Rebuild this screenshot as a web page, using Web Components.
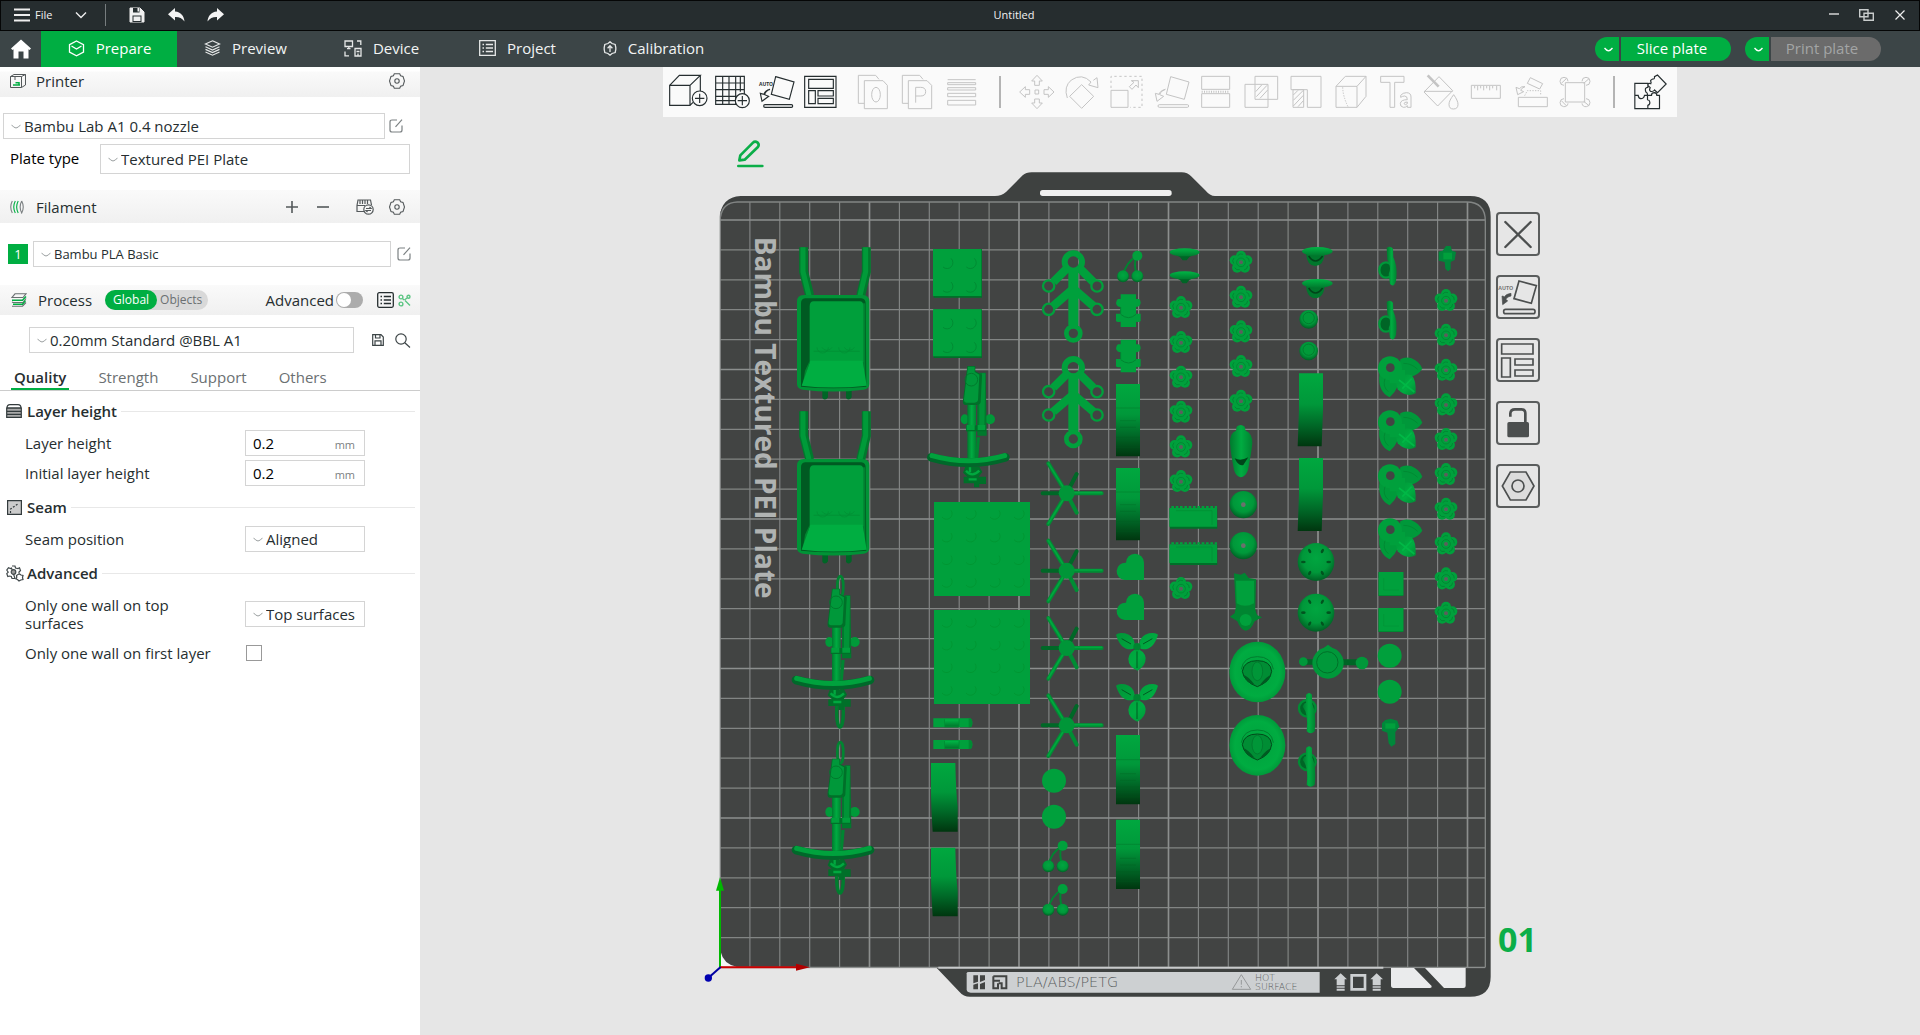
<!DOCTYPE html>
<html lang="en">
<head>
<meta charset="utf-8">
<title>Untitled</title>
<style>
html,body{height:100%}
body{margin:0;font:15px/18px "Open Sans","Noto Sans",sans-serif;color:#262e30;background:#e6e6e6;overflow:hidden}
</style>
</head>
<body>
<slicer-app>
  <title-bar slot="title" name="Untitled"></title-bar>
  <main-tabs slot="tabs"></main-tabs>
  <side-panel slot="side">
    <section-head icon="printer" label="Printer" first>
      <tool-button icon="gear" label="Printer settings"></tool-button>
    </section-head>
    <printer-row></printer-row>
    <plate-type></plate-type>
    <section-head icon="spool" label="Filament" tall>
      <tool-button icon="plus" label="Add filament"></tool-button>
      <tool-button class="wide" icon="minus" label="Remove filament"></tool-button>
      <tool-button class="mid" icon="ams" label="Sync filaments"></tool-button>
      <tool-button icon="gear" label="Filament settings"></tool-button>
    </section-head>
    <filament-row></filament-row>
    <process-head></process-head>
    <process-preset></process-preset>
    <quality-tabs></quality-tabs>
    <setting-group icon="layers" label="Layer height">
      <setting-row label="Layer height" kind="number" value="0.2"></setting-row>
      <setting-row label="Initial layer height" kind="number" value="0.2"></setting-row>
    </setting-group>
    <setting-group icon="seam" label="Seam">
      <setting-row label="Seam position" kind="select" value="Aligned"></setting-row>
    </setting-group>
    <setting-group icon="cogs" label="Advanced">
      <setting-row label="Only one wall on top surfaces" kind="select" value="Top surfaces"></setting-row>
      <setting-row label="Only one wall on first layer" kind="check"></setting-row>
    </setting-group>
  </side-panel>
  <plate-view slot="view"></plate-view>
</slicer-app>

<script>
/* name: [width, height, viewBox, stroke colour, stroke width, markup] */
const ICONS = {
  menu:[16,14,'0 0 16 14','#eee',2,'<path d="M0 1.5H16M0 7H16M0 12.5H16"/>'],
  down:[12,8,'0 0 12 8','#eee',1.4,'<path d="M1 1.5L6 6.5L11 1.5"/>'],
  save:[16,16,'0 0 16 16','#eee',1,'<path d="M1 1H11L15 5V15H1Z" fill="#f0f0f0"/><path d="M4 1V5.5H10.5V1M3.5 15V8.500H12.500V15" fill="#262e30" stroke="none"/><path d="M8.500 1H10V4.500H8.500ZM4.500 9.500H11.500V14H4.500Z" fill="#f0f0f0" stroke="none"/>'],
  undo:[17,14,'0 0 17 14','none',0,'<path fill="#f4f4f4" d="M7 0V3.500C13 4 16 8 16.500 13.500C14 10 11 8.800 7 9V12.500L0 6.300Z"/>'],
  redo:[17,14,'0 0 17 14','none',0,'<path fill="#f4f4f4" d="M10 0V3.500C4 4 1 8 .5 13.500C3 10 6 8.800 10 9V12.500L17 6.300Z"/>'],
  min:[10,12,'0 0 10 12','#eee',1.3,'<path d="M0 5H10"/>'],
  restore:[15,12,'0 0 15 12','#c8cccc',1.4,'<path d="M.7.7H9V7.700H.7ZM5 4.300H14.300V11.300H5Z"/>'],
  close:[10,10,'0 0 10 10','#eee',1.2,'<path d="M.5.5L9.500 9.500M9.500.5L.5 9.500"/>'],
  home:[20,20,'0 0 20 20','none',0,'<path fill="#fff" d="M10 .5L20 9.500L18.500 11L17.500 10.200V19.500H12.500V12.500H7.500V19.500H2.500V10.200L1.500 11L0 9.500Z"/>'],
  prepare:[17,17,'0 0 17 17','#fff',1.3,'<path d="M8.500 1L15.500 4.700V12L8.500 15.800L1.500 12V4.700ZM3.500 6L8.500 9L13.500 6"/>'],
  preview:[17,16,'0 0 17 16','#e6e8e8',1.2,'<path d="M8.500.8L15.500 4L8.500 7.200L1.500 4ZM1.500 6.800L8.500 10L15.500 6.800M1.500 9.400L8.500 12.600L15.500 9.400M1.500 12L8.500 15.200L15.500 12"/>'],
  device:[18,17,'0 0 18 17','#e6e8e8',1.3,'<path d="M1 1H8.500V6.500H1ZM3 8.700H6.500M4.800 6.500V8.700M13 1H16.800V5M1 11.500V15.800H5M11 8.500H17V16H11ZM12.500 11.500H15.500M14 13.500V16"/>'],
  project:[17,16,'0 0 17 16','#e6e8e8',1.3,'<path d="M.7.7H16.300V15.300H.7Z"/><path stroke-dasharray="1.500 1.800 20" d="M3.500 4.500H14M3.500 8H14M3.500 11.500H14"/>'],
  calib:[14,15,'0 0 14 15','#e6e8e8',1.3,'<path d="M7 .8L9 2.500L12.200 3.500L12.800 6.500L12.800 8.500L12.200 11.500L9 12.500L7 14.200L5 12.500L1.800 11.500L1.200 8.500L1.200 6.500L1.800 3.500L5 2.500Z"/><path d="M7 11V5M4.600 7.300L7 4.800L9.400 7.300"/>'],
  tick:[9,5,'0 0 9 5','#fff',1.3,'<path d="M.5 1Q2.500 3.600 4.500 3.800Q6.500 3.600 8.500 1"/>'],
  chev:[10,5,'0 0 10 5','#9a9fa0',1,'<path d="M.5.8Q2.500 3.600 5 4Q7.500 3.600 9.500.8"/>'],
  printer:[16,14,'0 0 16 14','#54595b',1,'<path d="M.5 2.500H11.500V13.500H.5ZM.5 2.500L4 .5H15.500L11.500 2.500M15.500.5V11L11.500 13.500M5 2.500V6"/><path stroke="#00ae42" stroke-width="1.500" d="M3 11H10M5.500 8.800H9V10.500"/>'],
  gear:[16,16,'0 0 16 16','#54595b',1.1,'<path d="M5.300.8H10.700L11.600 2.700L14 3.400L15.500 8L14 12.600L11.600 13.300L10.700 15.200H5.300L4.400 13.300L2 12.600L.5 8L2 3.400L4.400 2.700Z"/><circle cx="8" cy="8" r="2.200"/>'],
  edit:[14,14,'0 0 14 14','#7b8082',1.2,'<path d="M8 1H3Q1 1 1 3V11Q1 13 3 13H11Q13 13 13 11V6.500M6.500 7.800L13 .6"/>'],
  spool:[14,14,'0 0 14 14','#7b8082',1.1,'<path d="M2.300 1Q-.8 7 2.300 13M11.700 1Q14.800 7 11.700 13Q8.600 7 11.700 1"/><path stroke="#00ae42" d="M5.300 1Q2.200 7 5.300 13M8.200 1Q5.100 7 8.200 13"/>'],
  plus:[12,12,'0 0 12 12','#54595b',1.6,'<path d="M6 0V12M0 6H12"/>'],
  minus:[12,12,'0 0 12 12','#54595b',1.600,'<path d="M0 6H12"/>'],
  ams:[18,16,'0 0 18 16','#54595b',1.2,'<path d="M9 12.500H1V6.500L2 1H14.500L15.500 6M1 6.500H9M4 1V5M6.500 1V5M9 1V5M11.500 1V5"/><circle cx="12.500" cy="10.500" r="4.700" fill="#f6f6f6"/><path d="M10 9.500H15L13.500 8M15 11.500H10L11.500 13"/>'],
  process:[16,14,'0 0 16 14','#6a7072',1.100,'<path d="M4 .8H15L12 4.500H1ZM1 9L2 9.500H12L15 5.500M1 13.200H11.500L15 9.500"/><path stroke="#00ae42" stroke-width="1.500" d="M1 7.200H11.500L15 3.500M2 11.300H11.500L14.500 7.600"/>'],
  list:[17,16,'0 0 17 16','#262e30',1.300,'<rect x=".7" y=".7" width="15.600" height="14.600" rx="1.500"/><path stroke-dasharray="1.500 1.800 20" d="M3.500 4.500H14M3.500 8H14M3.500 11.500H14"/>'],
  nodes:[13,13,'0 0 13 13','#5cc583',1.4,'<circle cx="3" cy="3" r="1.900"/><circle cx="3" cy="10" r="1.900"/><circle cx="10.500" cy="2.800" r="1.500"/><path d="M4.500 4.500L6 6M7 6.500L12 11.500M6.500 6L9 4"/>'],
  disk:[12,12,'0 0 12 12','#3c4446',1.200,'<path d="M.7.7H9L11.300 3V11.300H.7ZM3.500.7V4H8V.7M3 11.300V6.800H9V11.300"/>'],
  search:[16,15,'0 0 16 15','#3c4446',1.200,'<circle cx="6" cy="6" r="5.200"/><path d="M9.800 9.800L15 14.500"/>'],
  layers:[16,14,'0 0 16 14','#333b3d',1.200,'<path d="M1 4Q1 .7 4 .7H12Q15 .7 15 4Z"/><path fill="#aaa" d="M.7 4.200H15.300V7.300H.7ZM.7 7.300H15.300V10.300H.7ZM.7 10.300H15.300V13.400H.7Z"/>'],
  seam:[15,15,'0 0 15 15','#333b3d',1.200,'<path fill="#ccc" d="M.6.6H14.400V14.400H.6Z"/><path stroke-dasharray="2 1.500" d="M3.500 13V9L11.500 3.500"/>'],
  cogs:[18,17,'0 0 18 17','#40484a',1.200,'<path d="M6 1H9L9.500 3L12 3.500L13.500 2.800L14.500 5.500L13 7V8.500M9 13.500H6L5.300 11.500L3.500 11L1.800 11.500L.8 8.700L2.200 7.200L.8 5L2.500 2.800L4.500 3.500L5.500 3Z"/><circle cx="7.500" cy="7" r="2.300" fill="#9a9a9a"/><path d="M12 9.500L13.500 9L15 10L17 10.500L16.500 12.500L17 14.500L14.800 15L13 16L11.500 14.500L10 14L10.800 12.200L10.500 10.500Z"/>'],
  /* plate toolbar: drawn on a grid three times finer than the button */
  t_cube:[44,50,'33 21 132 150','#262e30',3.500,'<path d="M44 76H105V136H44ZM44 76L73 46H136L105 76M136 46V94M105 136L114 127"/><circle cx="134" cy="115" r="22" fill="#fafafa"/><path d="M134 101V129M120 115H148"/>'],
  t_grid:[44,50,'165 21 132 150','#262e30',3.500,'<path d="M182 49H268V133H182ZM203 49V133M222 49V133M242 49V133M182 69H268M182 89H268M182 109H268M256 49V95M182 122H240"/><circle cx="262" cy="122" r="21" fill="#fafafa"/><path d="M262 108V136M248 122H276"/>'],
  t_auto:[44,50,'297 21 132 150','#262e30',3.500,'<path d="M362 50L417 66L403 118L349 103ZM345 88Q330 94 329 104L341 109L321 124L316 100L327 103Q330 92 345 88"/><rect x="326" y="134" width="87" height="8" rx="4"/><g stroke="none" fill="#262e30"><text x="312" y="77" font-size="15" font-weight="700" font-family="Open Sans">AUTO</text></g>'],
  t_layout:[44,50,'429 21 132 150','#262e30',3.500,'<path d="M449 49H543V142H449ZM461 58H535V85H461ZM461 92H481V131H461ZM489 92H535V108H489ZM489 115H535V131H489Z"/>'],
  t_zero:[44,50,'585 21 132 150','#c4c4c4',3,'<path d="M628 130H610V46H662L672 58M628 62H684L697 76V146H628Z"/><ellipse cx="663" cy="104" rx="13" ry="22"/>'],
  t_p:[44,50,'717 21 132 150','#c4c4c4',3,'<path d="M760 130H742V46H794L804 58M760 62H816L830 76V146H760ZM782 128V82H797Q812 82 812 95Q812 108 797 108H782"/>'],
  t_lines:[44,50,'849 21 132 150','#c4c4c4',3,'<path d="M878 59H962M878 68H962V74H878ZM878 83H962V90H878ZM878 100H962V110H878ZM878 121H962V135H878Z"/>'],
  t_move:[45,50,'1076 21 135 150','#c4c4c4',3,'<path d="M1145 46L1161 63H1152V76H1138V63H1129ZM1145 146L1161 129H1152V117H1138V129H1129ZM1093 96L1110 80V89H1123V103H1110V112ZM1196 96L1179 80V89H1166V103H1179V112ZM1139 90H1150V102H1139Z"/>'],
  t_rotate:[45,50,'1211 21 135 150','#c4c4c4',3,'<path d="M1279 74L1315 109L1279 145L1243 109ZM1236 114Q1224 80 1248 60Q1280 38 1307 66L1300 75L1328 83L1325 53L1314 61"/>'],
  t_scale:[45,50,'1346 21 135 150','#c4c4c4',3,'<path d="M1367 91H1418V142H1367ZM1422 80L1436 67L1428 62L1449 62V83L1442 75L1430 88Z"/><path stroke-dasharray="7 8" d="M1367 84V49H1460V142H1424"/>'],
  t_lay:[45,50,'1481 21 135 150','#c4c4c4',3,'<path d="M1546 50L1601 66L1587 118L1533 103ZM1530 88Q1514 94 1513 104L1525 109L1505 124L1500 100L1511 103Q1514 92 1530 88"/><rect x="1508" y="134" width="92" height="8" rx="4"/>'],
  t_cut:[45,50,'100 21 133 150','#c4c4c4',3,'<path d="M122 49H206V88H122ZM122 101H206V142H122Z"/><path stroke-width="6" stroke-dasharray="3 4" d="M122 95H206"/>'],
  t_bool:[45,50,'233 21 133 150','#c4c4c4',3,'<path d="M280 49H348V118H280ZM250 73H319V142H250ZM282 95L300 75M284 110L316 76M295 115L318 90"/>'],
  t_sub:[45,50,'367 21 133 150','#c4c4c4',3,'<path d="M387 49H477V142H436V89H387ZM393 89H425V142H393ZM394 105L408 91M394 121L424 91M394 138L424 106M408 140L424 122"/>'],
  t_box:[45,50,'500 21 133 150','#c4c4c4',3,'<path d="M520 79H583V142H520ZM520 79L548 49H610L583 79M610 49V109L583 142"/><path stroke-dasharray="4 4" d="M540 82Q541 110 556 140"/>'],
  t_text:[45,50,'634 21 133 150','#c4c4c4',3,'<path d="M653 49H723V67H695V142H681V67H653ZM713 112V106Q720 98 730 98Q744 98 744 111V142H733V137Q728 143 721 142Q711 140 712 130Q714 119 733 119Q733 108 725 108Q719 108 713 112ZM733 126Q723 126 723 131Q727 137 733 131Z"/>'],
  t_paint:[45,50,'767 21 133 150','#c4c4c4',3,'<path d="M826 50L867 92L822 138L781 96ZM781 94H867M870 104Q883 122 883 133Q883 147 869 147Q856 147 856 133Q856 122 870 104"/><path stroke-width="8" d="M792 46L825 80"/>'],
  t_ruler:[45,50,'900 21 133 150','#c4c4c4',3,'<path d="M921 76H1008V115H921ZM931 78V85M940 78V91M949 78V85M958 78V91M967 78V85M976 78V91M985 78V85M997 78V91"/>'],
  t_asm:[45,50,'1034 21 133 150','#c4c4c4',3,'<path d="M1061 112H1148V140H1061ZM1097 53L1134 71L1125 87L1088 70ZM1081 80Q1070 84 1068 91L1077 95L1059 104L1054 82L1064 86Q1070 78 1081 80"/><path stroke-dasharray="4 4" d="M1080 107L1088 92H1128V107"/>'],
  t_pts:[45,50,'1167 21 133 150','#c4c4c4',3,'<path d="M1200 68H1258V126H1200Z"/><path d="M1196 76A12 12 0 1 1 1208 64M1250 64A12 12 0 1 1 1262 76M1262 116A12 12 0 1 1 1250 130M1208 130A12 12 0 1 1 1196 116M1188 70L1204 55M1255 70L1271 56M1188 122L1204 138M1255 124L1271 137"/>'],
  t_puzzle:[44,50,'1384 21 131 150','#262e30',3.500,'<path d="M1404 70H1443V82Q1432 82 1437 96Q1442 97 1442 106H1433Q1431 116 1422 116Q1415 115 1414 106H1404ZM1404 106V146H1443V136Q1450 134 1449 126Q1448 120 1442 119V106H1454Q1454 98 1463 98Q1470 99 1470 106H1478V146H1443M1450 62L1457 57Q1464 58 1463 50L1472 45L1498 72L1472 98L1463 90Q1459 96 1451 94Q1446 90 1450 83L1443 76Q1444 68 1452 71Q1455 66 1450 62"/>'],
  pencil:[27,28,'245 241 81 84','#0bae48',8,'<path stroke-linejoin="round" d="M252 302L255 287L293 249Q299 243 307 249Q313 256 307 263L268 300Z"/><path stroke-linecap="round" d="M249 319H321"/>'],
  s_close:[44,44,'108 67 132 132','#4c4f4f',7,'<path stroke-linecap="round" d="M136 97L212 172M212 97L136 172"/>'],
  s_auto:[44,44,'108 257 132 132','#4c4f4f',5,'<path d="M177 275L229 289L214 342L162 328Z"/><path fill="#4c4f4f" d="M153 312Q138 314 134 322L126 320L128 346L143 335L138 330Q141 322 153 320Z" stroke-width="2"/><rect x="131" y="360" width="94" height="13" rx="6"/><g stroke="none" fill="#777"><text x="115" y="301" font-size="16" font-weight="700" font-family="Open Sans">AUTO</text></g>'],
  s_layout:[44,44,'108 445 132 132','#4c4f4f',5,'<path d="M125 463H219V493H125ZM125 505H151V562H125ZM165 508H219V526H165ZM165 541H219V559H165Z"/>'],
  s_lock:[44,44,'108 633 132 132','#4c4f4f',8,'<path d="M151 680V670Q152 658 165 658H185Q196 658 196 670V698"/><rect x="142" y="696" width="65" height="46" rx="5" fill="#4c4f4f" stroke="none"/>'],
  s_nut:[44,44,'106 822 132 132','#4c4f4f',5,'<path fill="#dcdcdc" d="M149 846H196L220 888L196 930H149L125 888Z"/><circle cx="172" cy="888" r="18"/>'],
};
const svg = n => { const [w,h,vb,c,sw,m] = ICONS[n];
  return `<svg width="${w}" height="${h}" viewBox="${vb}" fill="none" stroke="${c}" stroke-width="${sw}" aria-hidden="true">${m}</svg>`; };
const RESET = `*{box-sizing:border-box}button,input,select{font:inherit;color:inherit;background:none;border:0;margin:0;padding:0;outline:0}svg{display:block;flex:none}`;
const define = (tag, html) => customElements.define(tag, class extends HTMLElement {
  constructor(){ super(); this.attachShadow({mode:'open'}); }
  connectedCallback(){
    const t = document.createElement('template');
    t.innerHTML = `<style>${RESET}</style>` + html(k => this.getAttribute(k) || '', this);
    this.shadowRoot.replaceChildren(t.content.cloneNode(true));
  }
});

define('slicer-app', () => `<style>
:host{display:grid;grid-template:31px 36px minmax(0,1fr)/420px minmax(0,1fr);height:100vh}
::slotted([slot=title]),::slotted([slot=tabs]){grid-column:1/3}
</style><slot name="title"></slot><slot name="tabs"></slot><slot name="side"></slot><slot name="view"></slot>`);

define('tool-button', a => `<style>:host{display:block}button{display:block}
:host([framed]) button{box-shadow:inset 0 0 0 2px #5a5d5d;border-radius:4px}
</style>
<button type="button" aria-label="${a('label')}">${svg(a('icon'))}</button>`);

define('title-bar', a => `<style>
:host{display:flex;align-items:center;background:#262d2f;border:1px solid #050606;padding-bottom:1px;color:#f2f2f2;font-size:11px}
.left{display:flex;align-items:center;width:226px;padding-left:13px}
.file{display:flex;align-items:center;gap:5px}
.drop{margin-left:23px}.save,.undo{margin-left:23px}.redo{margin-left:22px}
i{width:1px;height:22px;background:#777d7f;margin-left:18px}
h1{flex:1;margin:0;font:inherit;text-align:center}
.win{display:flex;padding:0 3px 0 16px}
.win tool-button{width:33px;height:14px;display:grid;place-items:center}
</style><div class="left"><button type="button" class="file">${svg('menu')}File</button>
<tool-button class="drop" icon="down" label="File menu"></tool-button><i></i>
<tool-button class="save" icon="save" label="Save"></tool-button><tool-button class="undo" icon="undo" label="Undo"></tool-button><tool-button class="redo" icon="redo" label="Redo"></tool-button></div>
<h1>${a('name')}</h1>
<div class="win"><tool-button icon="min" label="Minimize"></tool-button><tool-button icon="restore" label="Restore"></tool-button><tool-button icon="close" label="Close"></tool-button></div>`);

define('main-tabs', () => `<style>
:host{display:flex;align-items:center;background:#3c4547;color:#f2f4f4}
.home{width:41px;height:36px;display:grid;place-items:center}
nav{display:flex;flex:1}
nav button{width:136px;height:36px;display:flex;align-items:center;justify-content:center;gap:11px;padding:0 0 2px 1px}
nav .on{background:#00ae42;color:#fff}
.acts{display:flex;gap:14px;padding-right:39px}
</style><button class="home" type="button" aria-label="Home">${svg('home')}</button>
<nav><button type="button" class="on">${svg('prepare')}Prepare</button><button type="button">${svg('preview')}Preview</button><button type="button">${svg('device')}Device</button><button type="button">${svg('project')}Project</button><button type="button">${svg('calib')}Calibration</button></nav>
<div class="acts"><split-button label="Slice plate"></split-button><split-button label="Print plate" off></split-button></div>`);

define('split-button', (a, el) => `<style>
:host{display:flex;gap:2px;color:#fff}
button{height:24px;background:#00ae42}
.d{width:24px;border-radius:12px 0 0 12px;display:grid;place-items:center;padding-left:3px}
.m{width:110px;border-radius:0 12px 12px 0;padding:0 8px 2px 0}
:host([off]) .m{background:#6b6b6b;color:#a3a5a5}
</style><button class="d" type="button" aria-label="${a('label')} options">${svg('tick')}</button><button class="m" type="button"${el.hasAttribute('off')?' disabled':''}>${a('label')}</button>`);

define('side-panel', () => `<style>
:host{display:flex;flex-direction:column;background:#fff;min-height:0}
</style><slot></slot>`);

define('section-head', a => `<style>
:host{display:flex;align-items:center;box-sizing:border-box;height:30px;padding:0 15px 0 10px;background:linear-gradient(#fafafa,#f0f0f0)}
:host([first]){background:linear-gradient(#fff,#fff 4px,#fafafa 5px,#f0f0f0);padding-bottom:2px}
:host([tall]){height:33px}
h2{margin:0 auto 0 10px;font:inherit}
::slotted(tool-button){margin-left:19px}
::slotted(.mid){margin-left:27px}
::slotted(tool-button:last-child){margin-left:15px}
i{width:16px}
</style><i>${svg(a('icon'))}</i><h2>${a('label')}</h2><slot></slot>`);

define('preset-select', a => `<style>
:host{display:grid;height:26px;box-sizing:border-box;border:1px solid #d4d4d4;background:#fff;align-items:center}
svg,select{grid-area:1/1}
svg{margin-left:7px;pointer-events:none}
select{appearance:none;width:100%;height:24px;padding-left:20px}
</style><select aria-label="${a('name')}"><option>${a('value')}</option></select>${svg('chev')}`);

define('printer-row', () => `<style>
:host{display:flex;align-items:center;gap:4px;padding:16px 17px 5px 3px}
preset-select{flex:1}
</style><preset-select value="Bambu Lab A1 0.4 nozzle" name="Printer preset"></preset-select><tool-button icon="edit" label="Edit printer"></tool-button>`);

define('plate-type', () => `<style>
:host{display:flex;align-items:center;padding:0 10px 16px 10px}
label{width:90px;color:#000;padding-bottom:2px}
div{flex:1;display:grid;height:30px;border:1px solid #d4d4d4;align-items:center}
svg,select{grid-area:1/1}svg{margin-left:7px;pointer-events:none}
select{appearance:none;width:100%;height:28px;padding-left:20px}
</style><label for="p">Plate type</label><div><select id="p"><option>Textured PEI Plate</option></select>${svg('chev')}</div>`);

define('filament-row', () => `<style>
:host{display:flex;align-items:center;padding:18px 9px 18px 8px}
b{width:20px;height:20px;background:#00ae42;color:#fff;font-weight:400;font-size:13px;line-height:20px;text-align:center;margin-right:5px}
preset-select{flex:1;font-size:13px}tool-button{margin-left:6px}
</style><b>1</b><preset-select value="Bambu PLA Basic" name="Filament 1"></preset-select><tool-button icon="edit" label="Edit filament"></tool-button>`);

define('process-head', () => `<style>
:host{display:flex;align-items:center;box-sizing:border-box;height:30px;padding:0 9px 0 11px;background:linear-gradient(#fafafa,#f0f0f0)}
h2{margin:0 13px 0 11px;font:inherit}
.seg{display:flex;height:20px;border-radius:10px;background:#d9d9d9;font-size:12px;color:#6b7072;margin-right:auto}
.seg button{height:20px;padding:0 6px 0 3px}
.seg .on{background:#00ae42;color:#fff;border-radius:10px;padding:0 8px}
label{display:flex;align-items:center;gap:2px}
input{appearance:none;width:27px;height:16px;border-radius:8px;background:#acacac;display:flex;align-items:center;padding:1px}
input::before{content:"";width:14px;height:14px;border-radius:7px;background:#fff}
.l{margin-left:14px}.n{margin-left:4px}
</style>${svg('process')}<h2>Process</h2><div class="seg"><button type="button" class="on">Global</button><button type="button">Objects</button></div>
<label>Advanced<input type="checkbox"></label><tool-button class="l" icon="list" label="Parameter list"></tool-button><tool-button class="n" icon="nodes" label="Compare presets"></tool-button>`);

define('process-preset', () => `<style>
:host{display:flex;align-items:center;padding:12px 9px 0 29px}
preset-select{flex:1}.s{margin:0 11px 0 18px}
</style><preset-select value="0.20mm Standard @BBL A1" name="Process preset"></preset-select><tool-button class="s" icon="disk" label="Save preset"></tool-button><tool-button icon="search" label="Search settings"></tool-button>`);

define('quality-tabs', () => `<style>
:host{display:flex;gap:26px;padding:12px 0 0 11px;border-bottom:1px solid #ccc;margin-bottom:5px}
button{height:25px;padding:0 3px;color:#6b7072;border-bottom:2px solid transparent}
.on{font-weight:600;color:#262e30;border-color:#00ae42}
</style><button class="on" type="button">Quality</button><button type="button">Strength</button><button type="button">Support</button><button type="button">Others</button>`);

define('setting-group', a => `<style>
:host{display:flex;flex-direction:column;gap:4px;margin-bottom:6px}
header{display:flex;align-items:center;height:30px;padding:0 5px 0 6px}
i{width:16px;display:grid;place-items:center;margin-right:5px}
h3{margin:0;font-size:15px;font-weight:600}
header::after{content:"";flex:1;height:1px;background:#e8e8e8;margin-left:4px}
</style><header><i>${svg(a('icon'))}</i><h3>${a('label')}</h3></header><slot></slot>`);

define('setting-row', a => `<style>
:host{display:flex;align-items:center;min-height:26px;padding-left:25px}
label{width:190px;margin-right:30px;padding:4px 0}
.f{display:flex;align-items:center;width:120px;height:26px;border:1px solid #d4d4d4;padding:0 7px}
.f input{flex:1;min-width:0;height:24px;color:#000}
.f span{font-size:11px;color:#7b8082;padding:3px 2px 0 0}
.f.s{display:grid;padding:0}
.s>*{grid-area:1/1}.s svg{margin-left:7px;pointer-events:none}
select{appearance:none;width:100%;height:24px;padding-left:20px}
.c{appearance:none;width:16px;height:16px;border:1px solid #999;margin-left:1px}
</style><label for="c">${a('label')}</label>${{
  number:`<div class="f"><input id="c" value="${a('value')}"><span>mm</span></div>`,
  select:`<div class="f s"><select id="c"><option>${a('value')}</option></select>${svg('chev')}</div>`,
  check:`<input class="c" type="checkbox" id="c">`}[a('kind')]}`);

define('plate-toolbar', () => {
  const b = (n,l) => `<tool-button icon="${n}" label="${l}"></tool-button>`;
  return `<style>:host{display:flex;align-items:center;height:50px;padding:0 5px 0 3px;background:#fafafa}
.g{width:8px}hr{width:2px;height:32px;border:0;background:#b4b4b4;margin:0 13px 0 17px}hr.e{margin:0 13px 0 14px}</style>`
  + b('t_cube','Add')+b('t_grid','Add plate')+b('t_auto','Auto orient')+b('t_layout','Arrange')+'<span class="g"></span>'
  + b('t_zero','Split to objects')+b('t_p','Split to parts')+b('t_lines','Variable layer height')+'<hr>'
  + b('t_move','Move')+b('t_rotate','Rotate')+b('t_scale','Scale')+b('t_lay','Lay on face')+b('t_cut','Cut')+b('t_bool','Mesh boolean')+b('t_sub','Support painting')+b('t_box','Seam painting')+b('t_text','Text shape')+b('t_paint','Colour painting')+b('t_ruler','Measure')+b('t_asm','Assemble')+b('t_pts','Brim ears')
  + '<hr class="e">'+b('t_puzzle','Assembly view');
});

define('plate-view', () => {
  const b = (n,l) => `<tool-button framed icon="${n}" label="${l}"></tool-button>`;
  return `<style>
:host{display:flex;flex-direction:column;align-items:center;background:#e6e6e6;min-width:0;overflow:hidden}
.name{padding:23px 0 0 37px;display:flex}
.stage{display:flex;align-items:flex-start;gap:4px;padding-right:99px}
.wrap{display:flex;flex-direction:column}
.col{display:flex;flex-direction:column;gap:19px;padding-top:95px;width:45px}
strong{font-size:34px;line-height:40px;color:#0bae48;padding:392px 0 0 2px}
</style><plate-toolbar></plate-toolbar>
<div class="stage"><div class="wrap"><div class="name"><tool-button icon="pencil" label="Rename plate"></tool-button></div><build-plate></build-plate></div>
<div class="col">${b('s_close','Remove plate')}${b('s_auto','Orient plate')}${b('s_layout','Arrange plate')}${b('s_lock','Lock plate')}${b('s_nut','Plate settings')}<strong>01</strong></div></div>`;
});

/* The bed and its models; three drawing units to a pixel. */
define('build-plate', () => {
  let thin='', bold='';
  for(let k=0;k<=25;k++){ const x=60+89.7*k, y=180+89.7*k;
    if(k%5) thin+=`M${x} 126V2422M60 ${y}H2356`; else bold+=`M${x} 126V2422M60 ${y}H2356`; }
  const use=(id,pts)=>pts.map(([x,y])=>`<use href="#${id}" x="${x}" y="${y}"/>`).join('');
  let studs=''; for(let i=0;i<4;i++)for(let j=0;j<4;j++) studs+=`<path d="M${24+i*72} ${45+j*68}a16 16 0 0 0 27 -20"/>`;
  const petals=[...Array(5)].map((_,i)=>{const t=(i*72+90)*Math.PI/180;return `<circle cx="${(Math.cos(t)*20).toFixed(1)}" cy="${(-Math.sin(t)*20).toFixed(1)}" r="15"/>`}).join('');
  const petalLines=[...Array(5)].map((_,i)=>`<path transform="rotate(${i*72})" d="M-10 -20A13 13 0 0 1 6 -24"/>`).join('');
  const slots=[...Array(6)].map((_,i)=>`<ellipse transform="rotate(${i*60})" cx="38" cy="0" rx="7" ry="4"/>`).join('');
  return `<style>:host{display:block;width:792px}svg{width:100%;height:auto}</style>
<svg viewBox="0 24 2376 2505" fill="#00a03c" role="img" aria-label="Build plate with models">
<defs>
<linearGradient id="arch" x2="0" y2="1"><stop offset="0" stop-color="#00a83f"/><stop offset=".42" stop-color="#00983a"/><stop offset=".7" stop-color="#006a28"/><stop offset="1" stop-color="#00360f"/></linearGradient>
<linearGradient id="bar" x2="0" y2="1"><stop offset="0" stop-color="#00b545"/><stop offset="1" stop-color="#007a2e"/></linearGradient>
<linearGradient id="side"><stop offset="0" stop-color="#007a2e"/><stop offset=".5" stop-color="#00ac41"/><stop offset="1" stop-color="#008231"/></linearGradient>
<radialGradient id="ball" cx=".5" cy=".4" r=".62"><stop offset="0" stop-color="#00a640"/><stop offset=".6" stop-color="#00983a"/><stop offset="1" stop-color="#005a22"/></radialGradient>
<linearGradient id="leaf" x2="1" y2="1"><stop offset="0" stop-color="#009437"/><stop offset=".6" stop-color="#00ac41"/><stop offset="1" stop-color="#008c35"/></linearGradient>
<radialGradient id="brim"><stop offset="0" stop-color="#00a03c"/><stop offset=".8" stop-color="#00ac41"/><stop offset="1" stop-color="#009a3a"/></radialGradient>
<g id="barrow"><path d="M20 0V73L38 145M208 0V73L191 145" fill="none" stroke="#007a2d" stroke-width="27"/><path d="M18 0V73L36 145M206 0V73L189 145" fill="none" stroke="#009a39" stroke-width="15"/>
<path fill="#006526" d="M76 425H93V450Q85 462 76 452ZM147 425H164V450Q156 462 147 452Z"/>
<path fill="#009336" d="M20 143H197Q217 143 217 163V410Q217 424 200 427Q108 438 17 427Q0 424 0 410V163Q0 143 20 143Z"/>
<path fill="#005a22" d="M24 153H193Q206 154 206 168L208 418Q108 428 12 418V168Q12 154 24 153Z"/>
<path fill="#008030" d="M186 168H205V410L198 345Z"/>
<path fill="#009f3b" d="M50 162H188Q199 162 199 176V345H38V176Q38 162 50 162Z"/><path fill="#00852f" d="M24 370L38 340V345L17 415Z"/>
<path fill="#00ae41" d="M40 340H197L209 415Q108 426 14 415Z"/>
<path d="M50 312H188M60 300a17 17 0 0 0 34 0M75 300a17 17 0 0 0 30 0M125 300a17 17 0 0 0 34 0M142 300a17 17 0 0 0 30 0" fill="none" stroke="#008d34" stroke-width="2"/></g>
<g id="brick4"><path fill="#007029" d="M2 0H147V146H2Z"/><path d="M0 0H145V141H0Z"/><path d="M30 54a16 16 0 0 0 24 -26M100 54a16 16 0 0 0 24 -26M30 125a16 16 0 0 0 24 -26M100 125a16 16 0 0 0 24 -26" fill="none" stroke="#00802f" stroke-width="2"/></g>
<g id="brick16"><path d="M0 0H288V282H0Z"/><g fill="none" stroke="#00932f" stroke-width="2">${studs}</g></g>
<g id="bike"><ellipse fill="#009a39" cx="388" cy="1446" rx="12" ry="15"/><ellipse fill="#009a39" cx="464" cy="1446" rx="15" ry="15"/>
<path fill="#007a2d" d="M434 1306H451L454 1495H426V1400Z"/><path fill="#009337" d="M440 1308H450L447 1470H432V1400Z"/>
<path fill="url(#side)" d="M396 1390H422V1580H396Z"/><path fill="#008531" d="M424 1500H434L428 1570H420Z"/>
<path fill="#007029" d="M392 1464H452V1482H392Z"/><path fill="#00a03c" d="M394 1463H418V1478H394ZM427 1463H450V1478H427Z"/>
<path fill="#007029" d="M396 1286H420V1302L440 1312L436 1395Q433 1404 420 1403H390Q381 1402 383 1388Z"/><path fill="#00983a" d="M398 1288H418V1304L432 1312L428 1388Q426 1396 416 1396H393Q385 1395 386 1386Z"/><circle cx="408" cy="1327" r="19" fill="none" stroke="#007a2d" stroke-width="3"/>
<path fill="#007029" d="M390 1588H432L441 1604L430 1618H452V1640H432V1650H416V1638H385V1618H396L383 1606Z"/><path d="M392 1600Q410 1622 432 1600M404 1590V1604M400 1626H424" fill="none" stroke="#00a83f" stroke-width="7"/>
<path d="M288 1560Q400 1592 510 1560" fill="none" stroke="#00682a" stroke-width="26" stroke-linecap="round"/><path d="M290 1555Q400 1586 508 1555" fill="none" stroke="#00a23d" stroke-width="15" stroke-linecap="round"/></g>
<g id="wheels"><ellipse cx="421" cy="1280" rx="9" ry="32" fill="none" stroke="#008531" stroke-width="8"/><ellipse cx="420" cy="1655" rx="10" ry="46" fill="none" stroke="#007d2e" stroke-width="10"/></g>
<g id="tree" fill="none" stroke="#00a03c"><circle cy="0" r="26" stroke-width="18"/><path d="M0 24V190" stroke-width="30"/><circle cy="214" r="21" stroke-width="14"/><path d="M-18 18L-60 60M18 18L60 60M0 80L-60 132M0 80L60 132" stroke-width="25"/><g stroke-width="7" fill="#424443"><circle cx="-74" cy="72" r="17"/><circle cx="71" cy="72" r="17"/><circle cx="-74" cy="142" r="17"/><circle cx="71" cy="142" r="17"/></g></g>
<g id="splay" stroke-linecap="round" stroke-width="12"><path stroke="#008d34" d="M0 0L-55 -90M0 0L105 0M0 0L30 58M0 0L-55 92"/><path stroke="#006827" d="M0 0L30 -58M0 0L-72 0"/><path stroke="#00a83f" stroke-width="5" d="M-55 -90L-10 -18M20 -2L105 -2M-55 90L-10 18"/><circle r="24" fill="#009638"/></g>
<g id="cherry"><path d="M0 0Q-35 20 -43 60M-4 5Q-12 30 0 60" fill="none" stroke="#008531" stroke-width="6"/><circle r="15"/><circle cx="-43" cy="62" r="18" fill="url(#ball)"/><circle cy="62" r="18" fill="url(#ball)"/></g>
<g id="bone"><path d="M0 0H110Q117 2 117 13Q117 26 110 27H0Z"/><path fill="#008a33" d="M33 3H78V27H33ZM106 0H110Q117 2 117 13Q117 26 110 27H106Z"/><path fill="url(#bar)" d="M35 3H76V24H35Z"/></g>
<g id="archL" fill="url(#arch)"><path d="M0 0H73Q75 90 80 130V206H5Q0 130 0 80Z"/></g>
<g id="archM"><path fill="url(#arch)" d="M0 0H72V217H0Z"/><path stroke="#005a20" stroke-width="2" opacity=".4" d="M0 72H72M12 110H60M12 130H60M0 160H72M0 176H72M0 190H72"/></g>
<g id="archS"><path fill="url(#arch)" d="M0 0H72V208H0Z"/><path stroke="#005a20" stroke-width="2" opacity=".4" d="M0 74H72M12 116H60M12 136H60M0 156H72M0 172H72M0 186H72"/></g>
<g id="archR" fill="url(#arch)"><path d="M4 0H76V110L72 219H0L4 110Z"/></g>
<g id="bot"><path d="M14 0H60V14H68Q74 16 74 26Q72 38 60 38V58H74V80Q70 84 60 82V98H14V82Q2 84 0 80V58H14V38Q2 38 0 26Q2 16 6 14H14Z"/><path fill="none" stroke="#008531" stroke-width="3" d="M14 60Q38 80 60 60M14 38V58"/></g>
<g id="disc"><path fill="#006526" d="M-30 6H30L14 14L6 24H-6L-14 14Z"/><ellipse rx="45" ry="12" fill="url(#bar)"/></g>
<g id="flower">${petals}<circle r="18"/><g fill="none" stroke="#008431" stroke-width="2.500">${petalLines}<circle r="13"/></g><circle r="6" fill="#5a5f5c"/></g>
<g id="hat"><path fill="#00772c" d="M-34 4H22Q20 44 -6 44Q-32 44 -34 4Z"/><path d="M-26 14Q-6 44 16 14" fill="none" stroke="#00451a" stroke-width="5"/><ellipse rx="46" ry="13" fill="url(#bar)"/></g>
<g id="knob"><circle r="28" fill="url(#ball)"/><circle cy="-4" r="17" fill="#009a39" stroke="#007d2e" stroke-width="3"/></g>
<g id="dome"><circle r="41" fill="url(#ball)"/><circle r="7" fill="#6b716d"/></g>
<g id="ridge"><path fill="#007029" d="M2 6H144V66H2Z"/><path d="M0 4H143V60H0Z"/><path stroke="#00a03c" stroke-width="6" stroke-dasharray="8 5" d="M6 1H143"/><path fill="none" stroke="#008d34" stroke-width="2" d="M20 12H128V55"/></g>
<g id="cloud"><path d="M82 80H24A24 24 0 0 1 28 28A27 27 0 1 1 82 28Z"/></g>
<g id="trio"><path fill="url(#leaf)" d="M-63 -36Q-56 -44 -36 -40Q-10 -34 -6 -6Q-4 6 -20 8Q-50 8 -63 -36ZM63 -36Q56 -44 36 -40Q10 -34 6 -6Q4 6 20 8Q50 8 63 -36ZM0 8Q22 12 26 34Q26 58 2 72Q-26 60 -26 36Q-22 12 0 8Z"/><path d="M-46 -24L-18 -8M46 -24L18 -8M0 14V64" fill="none" stroke="#005a22" stroke-width="3"/><circle r="11" fill="#008531"/></g>
<g id="sombrero"><ellipse rx="84" ry="91" fill="url(#brim)"/><path d="M-48 -8Q-42 -46 0 -46Q42 -46 48 -8" fill="none" stroke="#007d2e" stroke-width="3"/><path fill="#008d34" stroke="#004a1a" stroke-width="3" d="M-45 -2Q-40 -34 0 -34Q40 -34 43 -2Q38 30 0 44Q-40 30 -45 -2Z"/><path fill="#005a22" d="M-42 8Q-28 12 -8 38Q-32 34 -42 8ZM42 8Q28 12 8 38Q32 34 42 8Z"/><ellipse cy="-2" rx="16" ry="28" fill="#009638" stroke="#00702a" stroke-width="2"/></g>
<g id="melon"><ellipse rx="55" ry="57" fill="url(#ball)"/><g fill="#00541f">${slots}</g></g>
<g id="hookB"><ellipse cx="-12" cy="8" rx="20" ry="23" fill="#006526" stroke="#00983a" stroke-width="7"/><path fill="url(#side)" d="M-10 -58Q0 -66 9 -56L10 -30Q24 0 18 40Q12 62 0 50L-4 20Q6 0 -8 -22Z"/></g>
<g id="hookD"><ellipse cx="-6" cy="-15" rx="25" ry="25" fill="#006526" stroke="#008d34" stroke-width="7"/><path fill="url(#side)" d="M-10 -56Q0 -66 8 -56V-30Q22 0 16 54Q4 66 -8 54Q-2 0 -20 -20Q-14 -34 -10 -30Z"/></g>
<g id="leaves"><path fill="#00983a" d="M66 8Q78 0 98 4Q124 14 132 36Q120 54 98 60H60Z"/><path fill="#009a3a" d="M4 50Q-4 104 34 122Q66 96 62 50Z"/><path fill="url(#leaf)" d="M52 76Q70 46 100 56Q114 70 112 110Q84 124 58 98Z"/><circle cx="35" cy="35" r="36" fill="#00a03c"/><path fill="#00a03c" d="M34 40H80V80H34Z"/><path fill="none" stroke="#00b846" stroke-width="5" d="M62 70L108 106M72 96L100 66"/><path d="M20 66Q12 90 30 105M75 20Q100 20 118 38" fill="none" stroke="#008a33" stroke-width="3"/><circle cx="36" cy="33" r="13" fill="#424443"/></g>
<g id="sq"><path fill="#008a32" d="M0 0H75V72H0Z"/><path d="M2 0H75V69H2Z"/><path d="M16 18V54H62" fill="none" stroke="#009437" stroke-width="2"/></g>
</defs>
<path fill="#3e4140" d="M60 170Q64 112 122 108H885Q905 108 918 96L968 46Q978 37 995 37H1445Q1462 37 1475 50L1515 90Q1530 108 1545 108H2310Q2372 108 2372 170V2450Q2372 2510 2310 2510H810Q790 2510 778 2495L708 2422H60Z"/>
<clipPath id="bed"><path d="M58 170Q64 126 110 124H2300Q2358 124 2358 184V2426H58Z"/></clipPath>
<g clip-path="url(#bed)"><path fill="#424443" d="M60 126H2356V2422H60Z"/><path fill="none" stroke="#828584" stroke-width="3.500" d="${thin}"/><path fill="none" stroke="#8c8f8e" stroke-width="5" d="${bold}"/></g>
<path fill="none" stroke="#828584" stroke-width="4" d="M62 170Q68 128 112 126H2300Q2356 126 2356 184V2422"/>
<rect x="1020" y="90" width="395" height="18" rx="8" fill="#efefef"/>
<path fill="#f4f4f6" d="M62 2375Q70 2412 110 2420H62Z"/>
<path stroke="#c8cacb" stroke-width="6" d="M715 2423H2050"/>
<path fill="#cdd0d2" d="M800 2440Q800 2436 806 2436H1859V2498H812Q800 2498 800 2488Z"/>
<path fill="#424443" d="M820 2446H834V2465L820 2470ZM840 2446H855V2460L840 2466ZM820 2474L834 2470V2488H820ZM840 2472L855 2466V2488H840Z"/><path fill="none" stroke="#424443" stroke-width="6" d="M880 2449H919V2485H905V2470H896M880 2449V2485H894V2470M880 2462H900"/>
<text x="948" y="2482" font-family="DejaVu Sans" font-weight="200" font-size="43" fill="#5a5d5e">PLA/ABS/PETG</text>
<path fill="none" stroke="#8a8d8e" stroke-width="2.500" d="M1624 2444L1652 2488H1597ZM1624 2460V2474M1624 2478V2482"/>
<g font-family="DejaVu Sans" font-weight="200" font-size="28" fill="#5a5d5e"><text x="1665" y="2464">HOT</text><text x="1665" y="2489">SURFACE</text></g>
<path fill="#cdd0d2" d="M1922 2440L1941 2458H1934V2476H1910V2458H1903ZM1910 2479H1934V2483H1910ZM1910 2486H1934V2492H1910ZM2030 2440L2049 2458H2042V2476H2018V2458H2011ZM2018 2479H2042V2483H2018ZM2018 2486H2042V2492H2018Z"/><path fill="none" stroke="#cdd0d2" stroke-width="8" d="M1955 2446H1995V2488H1955Z"/>
<path fill="#eaebec" d="M2073 2424H2142L2195 2478Q2196 2484 2190 2484H2080Q2073 2484 2073 2476ZM2175 2424H2297V2478Q2297 2484 2290 2484H2232Z"/>
<text transform="translate(165 230) rotate(90)" font-family="Open Sans" font-weight="700" font-size="84" fill="#b0b3b2">Bambu Textured PEI Plate</text>
${use('barrow',[[291,262],[291,754]])}
${use('brick4',[[699,267],[699,448]])}
${use('brick16',[[702,1026],[702,1350]])}
<use href="#bike" x="406" y="-668"/>${use('wheels',[[0,0],[0,498]])}${use('bike',[[0,0],[0,510]])}
${use('tree',[[1120,306],[1120,623]])}
${use('splay',[[1100,1000],[1100,1232],[1100,1464],[1100,1696]])}
<circle cx="1062" cy="1862" r="36"/><circle cx="1062" cy="1970" r="36"/>
${use('cherry',[[1312,287],[1088,2057],[1088,2187]])}
${use('bone',[[700,1675],[700,1740]])}
${use('archL',[[693,1809],[693,2063]])}
${use('archM',[[1248,672],[1248,924]])}${use('archS',[[1248,1725],[1248,1979]])}
${use('archR',[[1793,640],[1793,894]])}
${use('bot',[[1248,403],[1248,539]])}
${use('disc',[[1454,277],[1454,346]])}
${use('flower',[...[443,548,652,757,861,965,1286].map(y=>[1443,y]),...[307,412,516,620,724].map(y=>[1623,y]),...[422,526,631,735,839,944,1048,1152,1257,1360].map(y=>[2238,y])])}
${use('hat',[[1852,274],[1852,370]])}
${use('knob',[[1826,478],[1826,573]])}
${use('dome',[[1630,1034],[1630,1157]])}
${use('melon',[[1848,1206],[1848,1358]])}
${use('ridge',[[1408,1040],[1408,1149]])}
${use('cloud',[[1250,1180],[1250,1300]])}
${use('trio',[[1311,1460],[1311,1613]])}
${use('sombrero',[[1672,1536],[1672,1756]])}
${use('hookB',[[2070,322],[2070,484]])}
${use('hookD',[[1828,1660],[1828,1820]])}
${use('leaves',[[2035,590],[2035,752],[2035,914],[2035,1076]])}
${use('sq',[[2035,1236],[2035,1344]])}
<circle cx="2069" cy="1487" r="36"/><circle cx="2069" cy="1595" r="36"/>
<path fill="url(#side)" d="M1610 800Q1622 790 1634 800L1637 812Q1658 820 1657 850Q1654 880 1644 930Q1636 952 1622 952Q1608 950 1602 930Q1592 880 1590 850Q1588 820 1608 812Z"/><path fill="#00451a" d="M1604 895Q1622 905 1645 892L1630 915Q1615 920 1604 895Z"/>
<path fill="#008531" d="M1602 1240L1622 1244L1634 1238L1646 1254L1668 1258L1666 1335Q1664 1352 1672 1366L1686 1372L1664 1384Q1652 1412 1637 1412Q1622 1410 1612 1384L1590 1370L1604 1360Q1610 1340 1606 1320Z"/><path fill="#00a03c" d="M1608 1262H1662V1330Q1635 1345 1610 1330Z"/><circle cx="1637" cy="1380" r="18"/>
<g fill="#00983a"><path fill="#006526" d="M1815 1498H1845V1514H1815ZM1925 1498H1970V1516H1925Z"/><circle cx="1810" cy="1505" r="13"/><circle cx="1986" cy="1509" r="19"/><circle cx="1884" cy="1509" r="47"/><path d="M1868 1466L1884 1454L1900 1466Z"/></g><circle cx="1882" cy="1507" r="32" fill="#00983a" stroke="#007029" stroke-width="3"/>
<g fill="#00873a"><path d="M2216 275L2228 272L2238 258L2252 258L2256 272L2268 276L2264 300L2252 306V328L2244 334L2236 326L2234 306L2216 302Z"/><path fill="#00a03c" d="M2230 278H2256V298H2230Z"/><path d="M2046 1690L2056 1680L2072 1676L2092 1682L2098 1700L2086 1716V1752L2074 1760L2066 1750L2062 1718L2046 1712Z"/><path fill="#00a03c" d="M2056 1690H2086V1706H2056Z"/></g>
<g stroke-width="6"><path stroke="#00b800" d="M60 2422V2185"/><path fill="#00b800" d="M48 2192L60 2152L72 2192Z"/><path stroke="#c00" d="M60 2422H300"/><path fill="#b00000" d="M288 2411L330 2422L288 2432Z"/><path stroke="#0000a0" d="M62 2421L28 2451"/><circle cx="25" cy="2454" r="11" fill="#0000b0"/></g>
</svg>`;
});
</script>
</body>
</html>
